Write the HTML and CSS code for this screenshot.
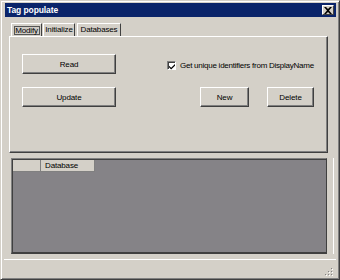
FILE: index.html
```html
<!DOCTYPE html>
<html lang="en">
<head>
  <meta charset="UTF-8">
  <title>Tag populate</title>
  <link rel="stylesheet" href="styles.css">
</head>
<body>
  <div class="window">
    <!-- Title bar -->
    <div class="titlebar">
      <span class="title">Tag populate</span>
      <span class="close">
        <svg width="8" height="7" viewBox="0 0 8 7"><path d="M0 0h2l2 2 2-2h2L5 3.5 8 7H6L4 5 2 7H0l3-3.5z" fill="#000"/></svg>
      </span>
    </div>

    <!-- Tabs -->
    <div class="tabs">
      <div class="tab tab-modify active"><span class="focus">Modify</span></div>
      <div class="tab tab-init">Initialize</div>
      <div class="tab tab-db">Databases</div>
    </div>

    <div class="tab-panel">
      <div class="col-left">
        <button class="btn wide">Read</button>
        <button class="btn wide">Update</button>
      </div>
      <div class="col-right">
        <label class="check">
          <span class="box">
            <svg width="7" height="7" viewBox="0 0 7 7"><path d="M0 2.5l2.5 2.5 4.5-4.5v2l-4.5 4.5L0 4.5z" fill="#000"/></svg>
          </span>
          Get unique identifiers from DisplayName
        </label>
        <div class="btn-row">
          <button class="btn small">New</button>
          <button class="btn small">Delete</button>
        </div>
      </div>
    </div>

    <!-- Grid -->
    <div class="grid-wrap">
      <div class="grid">
        <div class="grid-head">
          <div class="cell corner"></div>
          <div class="cell">Database</div>
        </div>
      </div>
    </div>

    <div class="statusbar">
      <svg class="grip" width="10" height="10" viewBox="0 0 10 10">
        <rect x="7" y="1" width="1" height="1" fill="#808080"/>
        <rect x="4" y="4" width="1" height="1" fill="#808080"/>
        <rect x="7" y="4" width="1" height="1" fill="#808080"/>
        <rect x="1" y="7" width="1" height="1" fill="#808080"/>
        <rect x="4" y="7" width="1" height="1" fill="#808080"/>
        <rect x="7" y="7" width="1" height="1" fill="#808080"/>
        <rect x="8" y="2" width="1" height="1" fill="#fff"/>
        <rect x="5" y="5" width="1" height="1" fill="#fff"/>
        <rect x="8" y="5" width="1" height="1" fill="#fff"/>
        <rect x="2" y="8" width="1" height="1" fill="#fff"/>
        <rect x="5" y="8" width="1" height="1" fill="#fff"/>
        <rect x="8" y="8" width="1" height="1" fill="#fff"/>
      </svg>
    </div>
  </div>
</body>
</html>
```
FILE: styles.css
```css
/* Classic windows dialog look */
body {
  margin: 0;
  padding: 0;
  font-family: "Liberation Sans", Arial, sans-serif;
  font-size: 8px;
  letter-spacing: -0.15px;
  color: #000;
}
.window {
  width: 340px;
  height: 280px;
  box-sizing: border-box;
  background-color: #d4d0c8;
  border-top: 1px solid #d4d0c8;
  border-left: 1px solid #d4d0c8;
  border-right: 1px solid #404040;
  border-bottom: 1px solid #404040;
  box-shadow: inset 1px 1px 0 #fff, inset -1px -1px 0 #808080;
  padding: 2px 3px 0 3px;
  display: flex;
  flex-direction: column;
}
.titlebar {
  height: 14px;
  margin: 0 0 0 1px;
  background-color: #0a246a;
  display: flex;
  align-items: center;
  justify-content: space-between;
  padding: 0 2px 0 2px;
}
.title {
  color: #fff;
  font-weight: bold;
  font-size: 8.5px;
  letter-spacing: -0.1px;
}
.close {
  width: 12px;
  height: 10px;
  box-sizing: border-box;
  background-color: #d4d0c8;
  border-top: 1px solid #fff;
  border-left: 1px solid #fff;
  border-right: 1px solid #404040;
  border-bottom: 1px solid #404040;
  display: flex;
  align-items: center;
  justify-content: center;
}
.tabs {
  display: flex;
  margin: 6px 0 0 7px;
  gap: 1px;
}
.tab {
  height: 13px;
  box-sizing: border-box;
  border-top: 1px solid #fff;
  border-left: 1px solid #fff;
  border-right: 1px solid #404040;
  display: flex;
  align-items: center;
  justify-content: center;
  line-height: 10px;
}
.tab-modify {
  width: 31px;
}
.tab-init {
  width: 32px;
}
.tab-db {
  width: 44px;
  margin-left: 1px;
}
.focus {
  border: 1px solid #555;
  width: 26px;
  height: 9px;
  box-sizing: border-box;
  text-align: center;
  line-height: 8px;
  background-color: #cfcbc4;
}
.tab-panel {
  margin: 0 8px 0 5px;
  height: 117px;
  box-sizing: border-box;
  border-top: 1px solid #fff;
  border-left: 1px solid #fff;
  border-right: 1px solid #404040;
  border-bottom: 1px solid #404040;
  box-shadow: inset -1px -1px 0 #808080;
  display: flex;
  padding: 17px 0 0 12px;
}
.col-left {
  display: flex;
  flex-direction: column;
  gap: 13px;
  width: 145px;
  flex-shrink: 0;
}
.col-right {
  display: flex;
  flex-direction: column;
  flex: 1;
  padding-right: 13px;
}
.btn {
  height: 20px;
  box-sizing: border-box;
  background-color: #d4d0c8;
  color: #000;
  font-family: inherit;
  font-size: 8px;
  letter-spacing: -0.1px;
  padding: 0;
  border-top: 1px solid #fff;
  border-left: 1px solid #fff;
  border-right: 1px solid #404040;
  border-bottom: 1px solid #404040;
  box-shadow: inset -1px -1px 0 #808080;
}
.btn.wide {
  width: 94px;
}
.btn.small {
  width: 49px;
}
.btn.small + .btn.small {
  width: 47px;
}
.check {
  display: flex;
  align-items: center;
  gap: 4px;
  height: 9px;
  margin-top: 7px;
  letter-spacing: -0.25px;
  white-space: nowrap;
}
.box {
  width: 9px;
  height: 9px;
  box-sizing: border-box;
  background-color: #fff;
  border-top: 1px solid #808080;
  border-left: 1px solid #808080;
  border-right: 1px solid #fff;
  border-bottom: 1px solid #fff;
  box-shadow: inset 1px 1px 0 #404040;
  display: flex;
  align-items: center;
  justify-content: center;
}
.box svg {
  margin: 1px 0 0 1px;
}
.btn-row {
  display: flex;
  justify-content: flex-end;
  gap: 18px;
  margin-top: 17px;
}
.grid-wrap {
  margin: 5px 2px 0 5px;
  padding: 0 6px 0 0;
  border-right: 1px solid #fff;
  height: 96px;
}
.grid {
  margin: 0 0 0 2px;
  height: 96px;
  box-sizing: border-box;
  background-color: #858387;
  border-top: 1px solid #808080;
  border-left: 1px solid #808080;
  border-right: 1px solid #404040;
  border-bottom: 2px solid #404040;
  box-shadow: inset 1px 1px 0 #404040;
}
.grid-head {
  display: flex;
  padding: 1px 0 0 1px;
}
.cell {
  height: 12px;
  box-sizing: border-box;
  width: 54px;
  background-color: #d4d0c8;
  border-right: 1px solid #808080;
  border-bottom: 1px solid #808080;
  padding-left: 4px;
  line-height: 11px;
}
.cell.corner {
  width: 28px;
}
.statusbar {
  margin: 5px 0 0 0;
  flex: 1;
  border-top: 1px solid #fff;
  display: flex;
  justify-content: flex-end;
  align-items: flex-end;
  padding: 0 2px 2px 0;
}
```
